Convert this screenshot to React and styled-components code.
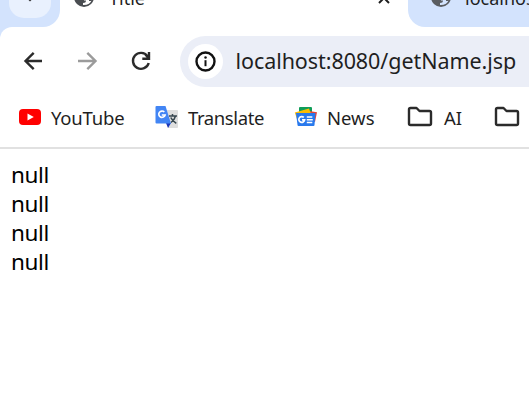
import React from 'react';
import styled, { createGlobalStyle } from 'styled-components';

const Global = createGlobalStyle`
  * { box-sizing: border-box; }
  html, body { margin: 0; background: #fff; overflow: hidden; }
  body { font-family: "Noto Sans", "Open Sans", sans-serif; color: #1f1f1f; }
  svg { display: block; flex: none; }
`;

const Browser = styled.div`
  width: 529px;
  height: 405px;
  overflow: hidden;
  background: #fff;
`;

const TabStrip = styled.header`
  display: flex;
  height: 27px;
  overflow: hidden;
  background: #fff;
`;

const SearchArea = styled.div`
  flex: none;
  width: 60px;
  height: 27px;
  padding-left: 9px;
  background: #d3e3fd;
  border-bottom-right-radius: 17px;
`;

const SearchButton = styled.button`
  display: flex;
  justify-content: center;
  width: 42px;
  height: 18px;
  padding: 0;
  border: 0;
  border-radius: 0 0 15px 15px;
  background: #e9f1fe;
`;

const Tab = styled.div`
  display: flex;
  flex: none;
  height: 27px;
  width: ${(p) => (p.$active ? 348 : 121)}px;
  padding-left: ${(p) => (p.$active ? 13 : 22)}px;
  background: ${(p) => (p.$active ? '#fff' : '#d3e3fd')};
  border-bottom-left-radius: ${(p) => (p.$active ? 0 : 17)}px;
`;

const TabTitle = styled.span`
  flex: 1;
  margin-top: -15px;
  margin-left: ${(p) => p.$gap}px;
  font-size: 18px;
  line-height: 27px;
  white-space: nowrap;
`;

const CloseIcon = styled.svg`
  margin: -9px 17px 0 0;
`;

const ToolbarBack = styled.div`
  background: linear-gradient(90deg, #d3e3fd 30px, #fff 30px);
`;

const Toolbar = styled.nav`
  display: flex;
  align-items: center;
  height: 69px;
  padding: 0 0 1px 21px;
  background: #fff;
  border-top-left-radius: 12px;
`;

const NavButton = styled.button`
  display: flex;
  width: 24px;
  height: 24px;
  margin-right: 30px;
  padding: 0;
  border: 0;
  background: none;
  color: ${(p) => (p.$disabled ? '#9b9b9b' : '#2b2b2b')};
`;

const AddressBar = styled.div`
  display: flex;
  align-items: center;
  flex: none;
  width: 380px;
  height: 51px;
  margin-left: -3px;
  padding-left: 8px;
  border-radius: 26px;
  background: #ebeef7;
`;

const SiteInfo = styled.span`
  display: flex;
  align-items: center;
  justify-content: center;
  width: 35px;
  height: 35px;
  border-radius: 50%;
  background: #fff;
`;

const Url = styled.span`
  margin-left: 12.5px;
  font-size: 21.5px;
  line-height: 30px;
  letter-spacing: -0.07px;
  white-space: nowrap;
`;

const Bookmarks = styled.nav`
  display: flex;
  align-items: center;
  height: 53px;
  padding: 0 0 9px 18px;
  border-bottom: 2px solid #e1e1e1;
`;

const Bookmark = styled.a`
  display: flex;
  align-items: center;
  flex: none;
  width: ${(p) => p.$width}px;
  gap: ${(p) => p.$gap}px;
  font-size: 18.5px;
  letter-spacing: ${(p) => p.$spacing || 0}px;
  white-space: nowrap;
`;

const Page = styled.main`
  padding: 11px 11px;
`;

const Line = styled.div`
  height: 29px;
  font-size: 22.5px;
  line-height: 29px;
  letter-spacing: -0.35px;
  color: #000;
`;

const Globe = ({ color, background }) => (
  <svg width="22" height="22" viewBox="0 0 22 22">
    <circle cx="11" cy="7" r="10" fill={color} />
    <path d="M11 7h3q2 0 2 2.500V11h2.500l.5-1.500C18 13 15 15.200 10 15v-2q3 0 3-2.500h-2z" fill={background} />
  </svg>
);

const TabIcon = styled.span`
  height: 22px;
  margin-top: -10px;
`;

const Arrow = ({ right }) => (
  <svg width="24" height="24" viewBox="0 0 24 24" fill="none" stroke="currentColor" strokeWidth="2.400">
    {right
      ? <path d="M3 12h17M12.300 3.800l8.200 8.200-8.200 8.200" />
      : <path d="M21 12H4M12.700 3.800L4.500 12l8.200 8.200" />}
  </svg>
);

const Reload = () => (
  <svg width="24" height="24" viewBox="0 0 24 24" fill="none" stroke="currentColor" strokeWidth="2.400">
    <path d="M18.500 7.200A8 8 0 1 0 19.700 14" />
    <path d="M20 3v6.700h-6.700M19.500 9l-3-3.500" />
  </svg>
);

const Info = () => (
  <svg width="22" height="22" viewBox="0 0 22 22">
    <circle cx="10.500" cy="11.500" r="9" fill="none" stroke="#111" strokeWidth="2.400" />
    <path d="M10.500 10.200v6" stroke="#111" strokeWidth="2" />
    <circle cx="10.500" cy="7.400" r="1.250" fill="#111" />
  </svg>
);

const YouTube = () => (
  <svg width="24" height="24" viewBox="0 0 24 24">
    <rect x="1" y="4" width="22" height="16" rx="4" fill="#f00" />
    <path d="M9.500 8.500l6.300 3.500-6.300 3.500z" fill="#fff" />
  </svg>
);

const Translate = () => (
  <svg width="24" height="24" viewBox="0 0 24 24">
    <path d="M9 5h13q1 0 1 1v16q0 1-1 1h-9z" fill="#dedede" />
    <path d="M11 18h5l-3 5z" fill="#1a35b8" />
    <path d="M1.500 1h9L16 18.500H1.500q-1 0-1-1V2q0-1 1-1z" fill="#4285f4" />
    <path d="M9.300 7a3.200 3.200 0 1 0 .8 3H6.800" fill="none" stroke="#fff" strokeWidth="1.700" />
    <path d="M14 11h8M17.500 9v2M20.500 11c-.7 3-2.500 5-4.500 6.500M15.800 12.500c1 2.500 3 4.300 5.500 5.800" fill="none" stroke="#37474f" strokeWidth="1.500" />
  </svg>
);

const News = () => (
  <svg width="24" height="24" viewBox="0 0 24 24">
    <rect x="5" y="2" width="13" height="9" rx="1" fill="#0f9d58" />
    <path d="M15 6l8 1.200-2 9.800-7-2z" fill="#ea4335" />
    <path d="M.8 7.500L15 3.500l4 10.500-15 3z" fill="#fbbc04" />
    <path d="M2 8h19.500l-1 12q0 1-1 1h-15q-1 0-1-1z" fill="#2979ed" />
    <path d="M9.800 12.400a2.900 2.900 0 1 0 .8 2.500H8" fill="none" stroke="#fff" strokeWidth="1.700" />
    <path d="M12.800 12h5.500M12.800 14.800h6M12.800 17.500h5.500" stroke="#fff" strokeWidth="1.500" />
  </svg>
);

const Folder = () => (
  <svg width="26" height="24" viewBox="0 0 26 24" fill="none" stroke="#2b2b2b" strokeWidth="2.400" strokeLinejoin="round">
    <path d="M2 18.500V4.500q0-1.500 1.500-1.500H9.500l3 3h10Q24 6 24 7.500v11q0 1.500-1.500 1.500h-19Q2 20 2 18.500z" />
  </svg>
);

export default function App() {
  return (
    <Browser>
      <Global />
      <TabStrip>
        <SearchArea>
          <SearchButton aria-label="Search tabs">
            <svg width="12" height="2" viewBox="0 0 12 2"><path d="M4.500 0h3L6 1.500z" fill="#333" /></svg>
          </SearchButton>
        </SearchArea>
        <Tab $active>
          <TabIcon><Globe color="#4a4d51" background="#fff" /></TabIcon>
          <TabTitle $gap={14}>Title</TabTitle>
          <CloseIcon width="14" height="14" viewBox="0 0 14 14">
            <path d="M2 2l10 10M12 2L2 12" stroke="#1f1f1f" strokeWidth="2" />
          </CloseIcon>
        </Tab>
        <Tab>
          <TabIcon><Globe color="#5a5d61" background="#d3e3fd" /></TabIcon>
          <TabTitle $gap={13}>localhost:8080</TabTitle>
        </Tab>
      </TabStrip>
      <ToolbarBack>
        <Toolbar>
          <NavButton aria-label="Back"><Arrow /></NavButton>
          <NavButton aria-label="Forward" $disabled><Arrow right /></NavButton>
          <NavButton aria-label="Reload"><Reload /></NavButton>
          <AddressBar>
            <SiteInfo><Info /></SiteInfo>
            <Url>localhost:8080/getName.jsp</Url>
          </AddressBar>
        </Toolbar>
      </ToolbarBack>
      <Bookmarks>
        <Bookmark $width={137} $gap={9} $spacing={-0.2}><YouTube />YouTube</Bookmark>
        <Bookmark $width={139} $gap={9} $spacing={-0.4}><Translate />Translate</Bookmark>
        <Bookmark $width={113} $gap={9}><News />News</Bookmark>
        <Bookmark $width={87} $gap={11}><Folder />AI</Bookmark>
        <Bookmark $width={30} $gap={0}><Folder /></Bookmark>
      </Bookmarks>
      <Page>
        <Line>null</Line>
        <Line>null</Line>
        <Line>null</Line>
        <Line>null</Line>
      </Page>
    </Browser>
  );
}
